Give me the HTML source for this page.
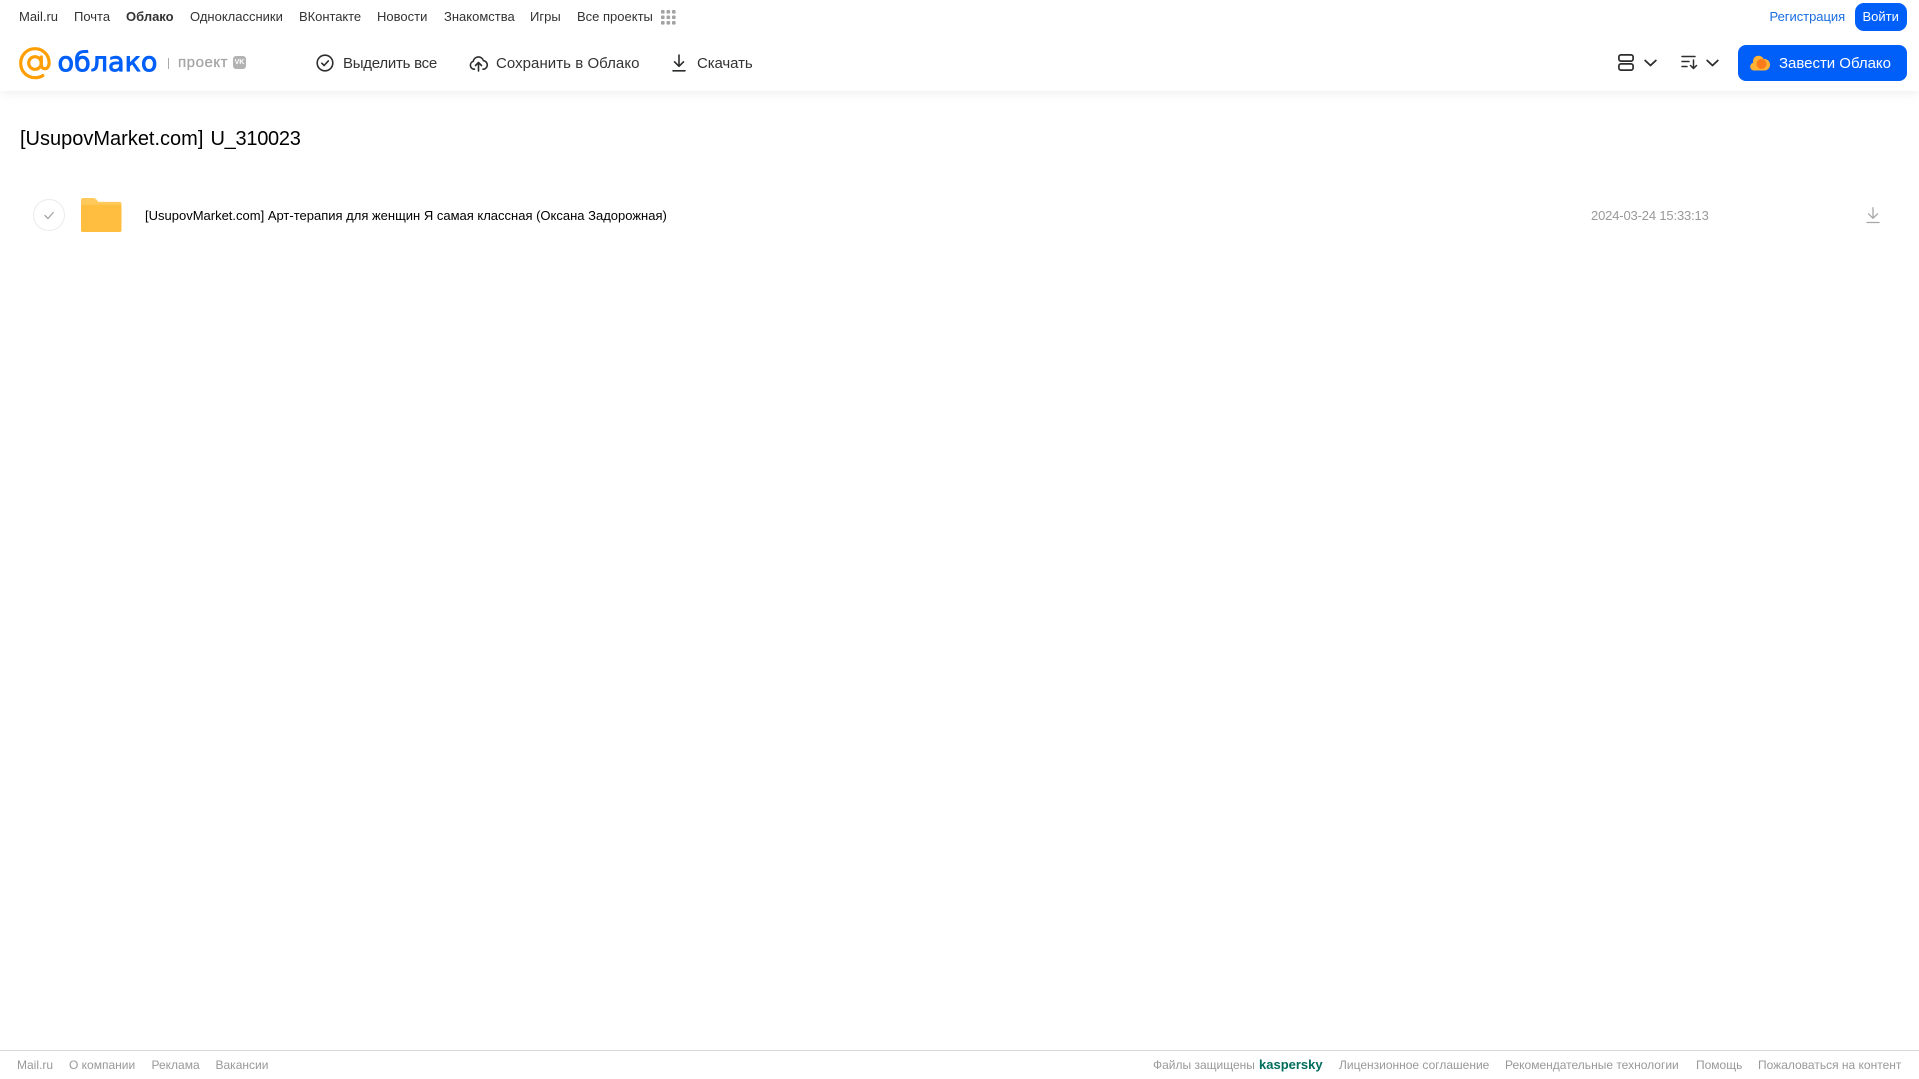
<!DOCTYPE html>
<html lang="ru"><head><meta charset="utf-8"><title>Облако</title>
<style>
html,body{margin:0;padding:0;background:#fff;width:1919px;height:1079px;overflow:hidden;font-family:"Liberation Sans",Arial,sans-serif}
.t{position:absolute;white-space:nowrap;line-height:20px;height:20px}
.n{top:7px;font-size:13px;color:#333}
.a{top:54px;font-size:15px;color:#333}
.f{top:1055px;font-size:12px;color:#999}
svg{position:absolute;overflow:visible}
#hdr{position:absolute;left:0;top:0;width:1919px;height:91px;background:#fff;box-shadow:0 2px 10px rgba(0,0,0,.07)}
</style></head><body>
<div id="hdr"></div>

<span class="t n" style="left:19px">Mail.ru</span>
<span class="t n" style="left:74px">Почта</span>
<span class="t n" style="left:126px;font-weight:bold">Облако</span>
<span class="t n" style="left:190px">Одноклассники</span>
<span class="t n" style="left:299px;letter-spacing:-.05px">ВКонтакте</span>
<span class="t n" style="left:377px">Новости</span>
<span class="t n" style="left:444px">Знакомства</span>
<span class="t n" style="left:530px">Игры</span>
<span class="t n" style="left:577px">Все проекты</span>
<svg style="left:661px;top:10px" width="15" height="15" fill="#a3a3a3"><rect x="0" y="0" width="3.6" height="3.6" rx="1"/><rect x="5.5" y="0" width="3.6" height="3.6" rx="1"/><rect x="11" y="0" width="3.6" height="3.6" rx="1"/><rect x="0" y="5.5" width="3.6" height="3.6" rx="1"/><rect x="5.5" y="5.5" width="3.6" height="3.6" rx="1"/><rect x="11" y="5.5" width="3.6" height="3.6" rx="1"/><rect x="0" y="11" width="3.6" height="3.6" rx="1"/><rect x="5.5" y="11" width="3.6" height="3.6" rx="1"/><rect x="11" y="11" width="3.6" height="3.6" rx="1"/></svg>

<span class="t n" style="left:1769.500px;color:#1a6ee0;letter-spacing:-.03px">Регистрация</span>
<div style="position:absolute;left:1855px;top:3px;width:52px;height:28px;border-radius:9px;background:#005ff9"></div>
<span class="t n" style="left:1862.500px;color:#fff">Войти</span>

<svg style="left:19px;top:47px" width="32" height="33" viewBox="0 0 32 33" fill="none" stroke="#ff9e00"><circle cx="16" cy="16" r="6.300" stroke-width="3.200"/><path d="M22.300 10v7.500c0 2.700 1.600 4.200 3.600 4.200 2.400 0 4.200-2.300 4.200-5.900C30.100 7.700 23.800 1.700 16 1.700 8 1.700 1.700 8 1.700 16.200S8 30.700 16 30.700c3 0 5.600-.7 7.800-2.100" stroke-width="3.200" stroke-linecap="round"/></svg>
<svg style="left:57px;top:44px" width="104" height="36"><text x="0.500" y="27" font-family="DejaVu Sans" font-size="27" fill="#005ff9" stroke="#005ff9" stroke-width=".9" stroke-linejoin="round" textLength="100" lengthAdjust="spacingAndGlyphs">облако</text></svg>
<div style="position:absolute;left:168px;top:58px;width:1px;height:11px;background:#aaa"></div>
<span class="t" style="left:178px;top:53px;font-size:15px;color:#a6a6a6;letter-spacing:.55px;-webkit-text-stroke:.3px #a6a6a6">проект</span>
<div style="position:absolute;left:233px;top:56px;width:13px;height:13px;border-radius:3px;background:#b3b3b3;color:#fff;font:bold 7px/13px 'Liberation Sans',sans-serif;text-align:center">VK</div>

<svg style="left:316px;top:54px" width="18" height="18" viewBox="0 0 18 18" fill="none" stroke="#2c2d2e" stroke-width="1.600"><circle cx="9" cy="9" r="7.800"/><path d="M5.800 9.200l2.300 2.300 4.200-4.600" stroke-linecap="round" stroke-linejoin="round"/></svg>
<span class="t a" style="left:343px;letter-spacing:-.25px">Выделить все</span>
<svg style="left:468.500px;top:54px" width="19" height="18" viewBox="0 0 19 18" fill="none" stroke="#2c2d2e" stroke-width="1.600" stroke-linecap="round" stroke-linejoin="round"><path d="M5.500 15.200H5a4 4 0 0 1-.8-7.800 5.300 5.300 0 0 1 10.300-.7 4.300 4.300 0 0 1 .3 8.500h-.8"/><path d="M9.500 17V9M6.500 11.500l3-3 3 3"/></svg>
<span class="t a" style="left:496px;letter-spacing:.05px">Сохранить в Облако</span>
<svg style="left:671px;top:54px" width="16" height="18" viewBox="0 0 16 18" fill="none" stroke="#2c2d2e" stroke-width="1.600" stroke-linecap="round" stroke-linejoin="round"><path d="M8 1v11M3.500 7.800L8 12.300l4.500-4.500M2 16.800h12"/></svg>
<span class="t a" style="left:697px;letter-spacing:-.1px">Скачать</span>

<svg style="left:1618px;top:54px" width="16" height="17" viewBox="0 0 16 17" fill="none" stroke="#2c2d2e" stroke-width="1.700"><rect x=".9" y=".9" width="14.200" height="6.200" rx="2"/><rect x=".9" y="9.900" width="14.200" height="6.200" rx="2"/></svg>
<svg style="left:1644px;top:59px" width="13" height="8" viewBox="0 0 13 8" fill="none" stroke="#2c2d2e" stroke-width="1.800" stroke-linecap="round" stroke-linejoin="round"><path d="M1.200 1.500l5.300 5 5.300-5"/></svg>
<svg style="left:1681px;top:55px" width="17" height="15" viewBox="0 0 17 15" fill="none" stroke="#2c2d2e" stroke-width="1.500" stroke-linecap="round" stroke-linejoin="round"><path d="M1 1.500h13M1 6.500h7M1 11.500h5M12.500 5v8.500M9.500 10.500l3 3 3-3"/></svg>
<svg style="left:1706px;top:59px" width="13" height="8" viewBox="0 0 13 8" fill="none" stroke="#2c2d2e" stroke-width="1.800" stroke-linecap="round" stroke-linejoin="round"><path d="M1.200 1.500l5.300 5 5.300-5"/></svg>

<div style="position:absolute;left:1738px;top:45px;width:169px;height:36px;border-radius:8px;background:#005ff9"></div>
<svg style="left:1750px;top:53.500px" width="19" height="17" viewBox="0 0 19 17"><path d="M4 16.500a3.900 3.900 0 0 1-.8-7.700A5.500 5.500 0 0 1 13.500 5a4.500 4.500 0 0 1 1.500 11.500z" fill="#ffb233"/><circle cx="11.500" cy="10" r="5" fill="#ff7a1a"/></svg>
<span class="t a" style="left:1779px;color:#fff;letter-spacing:-.02px">Завести Облако</span>

<span class="t" style="left:20px;top:126.500px;height:24px;line-height:24px;font-size:20px;color:#000">[UsupovMarket.com]</span>
<span class="t" style="left:210.500px;top:126.500px;height:24px;line-height:24px;font-size:20px;color:#000;letter-spacing:-.28px">U_310023</span>

<svg style="left:33px;top:199px" width="32" height="32" viewBox="0 0 32 32" fill="none"><circle cx="16" cy="16" r="15.500" stroke="#ebebeb" stroke-width="1"/><path d="M12 16.500l3 3 5.200-6" stroke="#a3a3a3" stroke-width="1.300" stroke-linecap="round" stroke-linejoin="round"/></svg>
<svg style="left:81px;top:198px" width="40.500" height="34" viewBox="0 0 41 35" preserveAspectRatio="none"><path d="M2 0h10c2 0 3 .8 4 2l1.500 2H39a2 2 0 0 1 2 2v27a2 2 0 0 1-2 2H2a2 2 0 0 1-2-2V2a2 2 0 0 1 2-2z" fill="#ffc95c"/><path d="M0 9a2 2 0 0 1 2-2h37a2 2 0 0 1 2 2v24a2 2 0 0 1-2 2H2a2 2 0 0 1-2-2z" fill="#ffbe40"/></svg>
<span class="t" style="left:145px;top:206px;font-size:13px;color:#000">[UsupovMarket.com] Арт-терапия для женщин Я самая классная (Оксана Задорожная)</span>
<span class="t" style="left:1591px;top:206px;font-size:13px;color:#999;letter-spacing:-.16px">2024-03-24 15:33:13</span>
<svg style="left:1866px;top:207px" width="14" height="17" viewBox="0 0 14 17" fill="none" stroke="#a6a6a6" stroke-width="1.300" stroke-linecap="round" stroke-linejoin="round"><path d="M7 .8v10.400M2.500 6.800L7 11.300l4.500-4.500M1 15.500h12"/></svg>

<div style="position:absolute;left:0;top:1050px;width:1919px;height:1px;background:#d9d9d9"></div>
<span class="t f" style="left:17px">Mail.ru</span>
<span class="t f" style="left:69px">О компании</span>
<span class="t f" style="left:151.500px">Реклама</span>
<span class="t f" style="left:215.500px">Вакансии</span>
<span class="t f" style="left:1153px">Файлы защищены</span>
<span class="t f" style="left:1259px;color:#006d5c;font-weight:bold;font-size:13px">kaspersky</span>
<span class="t f" style="left:1339px">Лицензионное соглашение</span>
<span class="t f" style="left:1505px">Рекомендательные технологии</span>
<span class="t f" style="left:1696px">Помощь</span>
<span class="t f" style="left:1758px">Пожаловаться на контент</span>
</body></html>
